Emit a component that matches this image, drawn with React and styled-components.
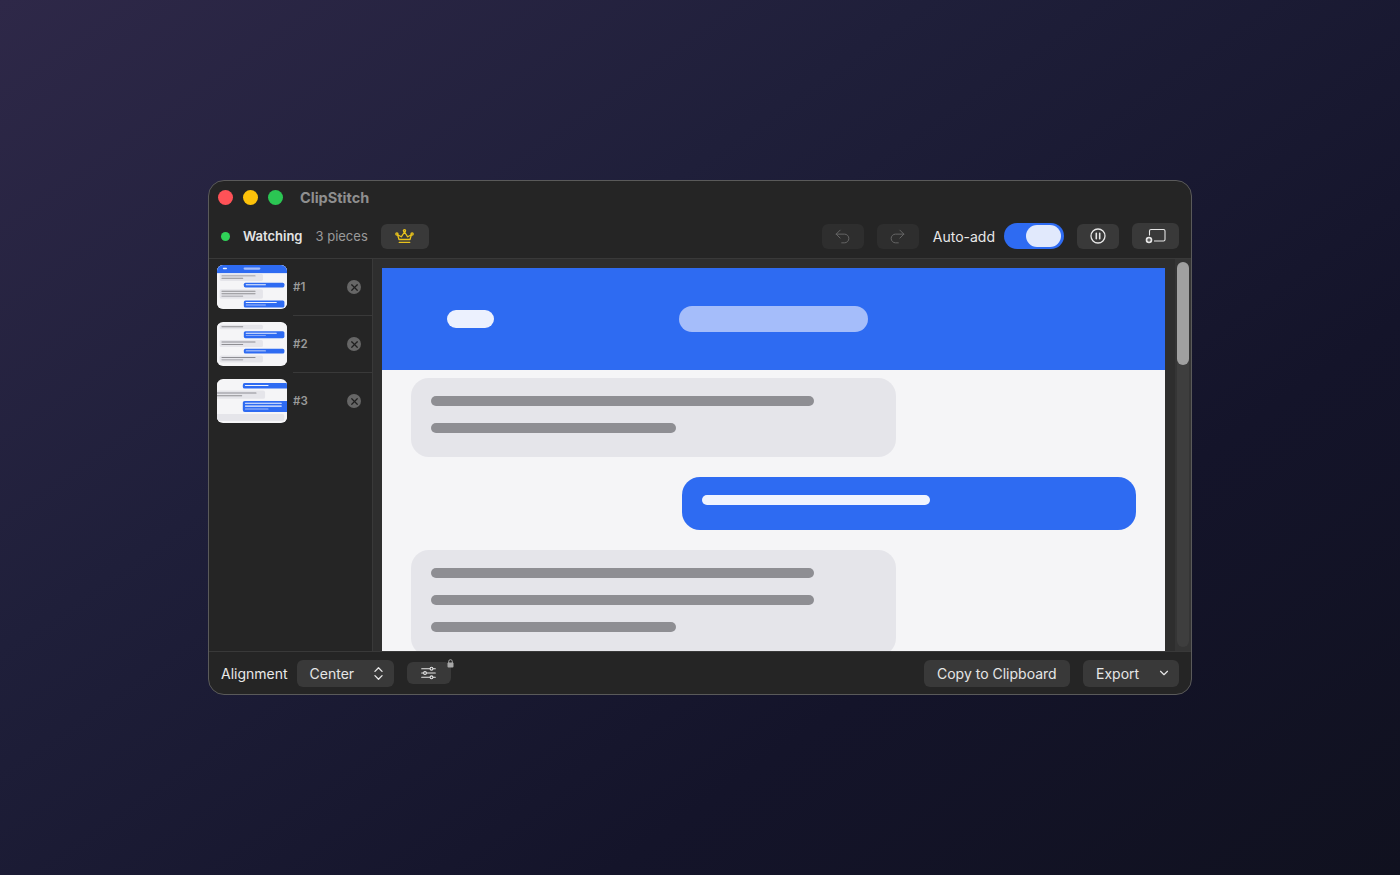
import React from 'react'
import styled, { createGlobalStyle } from 'styled-components'
import { ChevronDown, ChevronsUpDown, Redo2, Undo2, X } from 'lucide-react'

const BLUE = '#2e6bf2'
const PALE = '#f0f4fe'

const GlobalStyle = createGlobalStyle`
  html, body {
    margin: 0;
    height: 100%;
  }
  body {
    font-family: Inter, "Liberation Sans", sans-serif;
    background: linear-gradient(145deg, #2e2848 0%, #1f1f3a 35%, #14142a 70%, #10111f 100%);
  }
  #root {
    height: 100%;
  }
`

const Desktop = styled.div`
  height: 875px;
  display: flex;
  align-items: center;
  justify-content: center;
`

const Window = styled.div`
  width: 984px;
  height: 515px;
  box-sizing: border-box;
  display: flex;
  flex-direction: column;
  background: #252525;
  border: 1px solid #5a5a5a;
  border-radius: 16px;
  overflow: hidden;
  color: #e8e8e8;
`

const TitleBar = styled.div`
  height: 34px;
  flex-shrink: 0;
  box-sizing: border-box;
  display: flex;
  align-items: center;
  padding: 0 0 2px 9px;
  gap: 10px;
`

const Light = styled.span`
  width: 15px;
  height: 15px;
  border-radius: 50%;
  background: ${p => p.$color};
`

const AppName = styled.span`
  margin-left: 7px;
  font-size: 14.5px;
  font-weight: 700;
  color: #8f8f8f;
`

const Toolbar = styled.div`
  height: 44px;
  flex-shrink: 0;
  box-sizing: border-box;
  display: flex;
  align-items: center;
  padding: 0 12px 1px;
  border-bottom: 1px solid #393939;
`

const StatusDot = styled.span`
  width: 9px;
  height: 9px;
  border-radius: 50%;
  background: #30d158;
  margin-right: 13px;
`

const Status = styled.span`
  font-size: 13px;
  font-weight: 600;
  color: #e4e4e4;
  margin-right: 13px;
`

const Count = styled.span`
  font-size: 13px;
  color: #9a9a9a;
  margin-right: 13px;
`

const Spacer = styled.div`
  flex: 1;
`

const IconButton = styled.div`
  width: ${p => p.$w || 42}px;
  height: ${p => p.$h || 25}px;
  border-radius: 6px;
  display: flex;
  align-items: center;
  justify-content: center;
  background: ${p => (p.$dim ? '#2e2e2e' : '#393939')};
  color: ${p => (p.$dim ? '#6e6e6e' : '#e6e6e6')};
  margin-left: ${p => p.$ml || 0}px;
  position: relative;
`

const SwitchLabel = styled.span`
  font-size: 14px;
  color: #e8e8e8;
  margin: 0 9px 0 14px;
`

const Switch = styled.div`
  width: 60px;
  height: 26px;
  box-sizing: border-box;
  padding: 2px 3px;
  border-radius: 13px;
  background: ${BLUE};
  display: flex;
  justify-content: flex-end;
`

const Knob = styled.div`
  width: 35px;
  height: 22px;
  border-radius: 11px;
  background: #e1e9fc;
`

const Body = styled.div`
  flex: 1;
  min-height: 0;
  display: flex;
`

const Sidebar = styled.div`
  width: 164px;
  flex-shrink: 0;
  box-sizing: border-box;
  border-right: 1px solid #393939;
  padding: 6px 0 0 8px;
`

const Piece = styled.div`
  height: 57px;
  box-sizing: border-box;
  display: flex;
  align-items: flex-start;
  gap: 6px;
`

const Thumb = styled.div`
  width: 70px;
  height: 44px;
  flex-shrink: 0;
  border-radius: 6px;
  overflow: hidden;
  background: #f5f5f7;
`

const ThumbScale = styled.div`
  width: 783px;
  transform-origin: 0 0;
  transform: translate(${p => p.$x || 0}px, ${p => p.$y || 0}px) scale(${p => p.$scale || 0.0894});
`

const PieceMeta = styled.div`
  flex: 1;
  height: 44px;
  display: flex;
  align-items: center;
  justify-content: space-between;
  padding-right: 11px;
  position: relative;
  &::after {
    content: '';
    display: ${p => (p.$last ? 'none' : 'block')};
    position: absolute;
    left: 0;
    right: 0;
    top: 50px;
    height: 1px;
    background: #393939;
  }
`

const PieceNumber = styled.span`
  font-size: 11.5px;
  font-weight: 600;
  color: #9a9a9a;
`

const RemoveDot = styled.div`
  width: 14px;
  height: 14px;
  border-radius: 50%;
  background: #666;
  color: #1f1f1f;
  display: flex;
  align-items: center;
  justify-content: center;
`

const Canvas = styled.div`
  flex: 1;
  min-width: 0;
  display: flex;
  background: #2e2e2e;
`

const Viewport = styled.div`
  flex: 1;
  min-width: 0;
  padding: 9px 10px 0 9px;
  overflow: hidden;
`

const Doc = styled.div`
  background: #f5f5f7;
  height: 100%;
  overflow: hidden;
`

const Page = styled.div`
  background: #f5f5f7;
  width: 783px;
`

const ChatHeader = styled.div`
  height: 102px;
  background: ${BLUE};
  display: flex;
  align-items: center;
  padding-left: 65px;
  gap: 185px;
`

const BackPill = styled.div`
  width: 47px;
  height: 18px;
  border-radius: 9px;
  background: #ecf1fe;
`

const TitlePill = styled.div`
  width: 189px;
  height: 26px;
  border-radius: 13px;
  background: #a5bdfa;
`

const Thread = styled.div`
  display: flex;
  flex-direction: column;
  gap: 20px;
  padding: 8px 29px;
`

const Bubble = styled.div`
  box-sizing: border-box;
  width: ${p => p.$w || (p.$sent ? 454 : 485)}px;
  min-height: ${p => p.$h || (p.$sent ? 53 : 0)}px;
  align-self: ${p => (p.$sent ? 'flex-end' : 'flex-start')};
  border-radius: 18px;
  background: ${p => (p.$sent ? BLUE : '#e5e5ea')};
  padding: 18px 20px 24px;
  display: flex;
  flex-direction: column;
  gap: 17px;
`

const Line = styled.div`
  height: 10px;
  border-radius: 5px;
  width: ${p => p.$w}px;
  background: ${p => p.$color};
`

const ScrollTrack = styled.div`
  width: 16px;
  flex-shrink: 0;
  box-sizing: border-box;
  padding: 3px 2px 4px;
  background: #353535;
`

const ScrollRail = styled.div`
  height: 100%;
  border-radius: 6px;
  background: #3e3e3e;
`

const ScrollThumb = styled.div`
  height: 103px;
  border-radius: 6px;
  background: #a0a0a0;
`

const Footer = styled.div`
  height: 43px;
  flex-shrink: 0;
  box-sizing: border-box;
  display: flex;
  align-items: center;
  padding: 0 12px;
  border-top: 1px solid #393939;
  font-size: 14px;
`

const FooterLabel = styled.span`
  color: #e8e8e8;
  margin-right: 9px;
`

const SelectButton = styled.div`
  height: 27px;
  box-sizing: border-box;
  border-radius: 6px;
  background: #393939;
  color: #e6e6e6;
  display: flex;
  align-items: center;
  justify-content: space-between;
  width: ${p => p.$w}px;
  padding: ${p => p.$pad || '0 13px'};
  margin-left: ${p => p.$ml || 0}px;
  white-space: nowrap;
`

const LockBadge = styled.span`
  position: absolute;
  top: -3px;
  right: -3px;
  display: flex;
  color: #a8a8a8;
`

const received2 = [383, 245]
const received3 = [383, 383, 245]

const Received = ({ lines, w, h }) => (
  <Bubble $w={w} $h={h}>
    {lines.map((width, i) => (
      <Line key={i} $w={width} $color="#8e8e93" />
    ))}
  </Bubble>
)

const Sent = ({ lines }) => (
  <Bubble $sent>
    {lines.map((width, i) => (
      <Line key={i} $w={width} $color={i < lines.length - 1 || lines.length === 1 ? PALE : '#a5bdfa'} />
    ))}
  </Bubble>
)

const PieceOne = () => (
  <Page>
    <ChatHeader>
      <BackPill />
      <TitlePill />
    </ChatHeader>
    <Thread>
      <Received lines={received2} />
      <Sent lines={[228]} />
      <Received lines={received3} />
      <Sent lines={[350, 228]} />
    </Thread>
  </Page>
)

const PieceTwo = () => (
  <Page>
    <Thread>
      <Received lines={[245]} />
      <Sent lines={[350, 228]} />
      <Received lines={received2} />
      <Sent lines={[228]} />
      <Received lines={received2} />
    </Thread>
  </Page>
)

const PieceThree = () => (
  <Page>
    <Thread>
      <Sent lines={[228]} />
      <Received lines={received2} />
      <Sent lines={[355, 355, 228]} />
      <Received lines={[]} w={670} h={67} />
    </Thread>
  </Page>
)

const pieces = [
  { id: 1, Content: PieceOne, y: -1 },
  { id: 2, Content: PieceTwo, y: 2 },
  { id: 3, Content: PieceThree, x: -5.4, y: 3.2, scale: 0.104 },
]

const CrownIcon = () => (
  <svg width="19" height="15" viewBox="0 0 19 15" fill="none" stroke="#e8c21c" strokeWidth="1.3" strokeLinejoin="round">
    <path d="M4 10.500 2.600 5.800 6.300 7.800 9.500 3 12.700 7.800 16.400 5.800 15 10.500Z" />
    <path d="M4.200 13.300h10.600" strokeLinecap="round" />
    <circle cx="9.500" cy="1.800" r="1.100" />
    <circle cx="1.900" cy="5" r="1.100" />
    <circle cx="17.100" cy="5" r="1.100" />
  </svg>
)

const PauseIcon = () => (
  <svg width="16" height="16" viewBox="0 0 16 16" fill="none" stroke="currentColor" strokeWidth="1.3">
    <circle cx="8" cy="8" r="7" />
    <path d="M6.300 5.300v5.400M9.700 5.300v5.400" strokeWidth="1.600" strokeLinecap="round" />
  </svg>
)

const AddFrameIcon = () => (
  <svg width="21" height="16" viewBox="0 0 21 16" fill="none">
    <path d="M4.500 7.500V3A1.500 1.500 0 0 1 6 1.500h12.500A1.500 1.500 0 0 1 20 3v8.500a1.500 1.500 0 0 1-1.500 1.500H9" stroke="currentColor" strokeWidth="1.100" />
    <circle cx="4" cy="12" r="3.300" fill="currentColor" />
    <path d="M2.200 12h3.600M4 10.200v3.600" stroke="#393939" strokeWidth="1.100" />
  </svg>
)

const SlidersIcon = () => (
  <svg width="15" height="14" viewBox="0 0 15 14" fill="none" stroke="currentColor" strokeWidth="1.100" strokeLinecap="round">
    <path d="M0.700 2.700h13.600M0.700 7h13.600M0.700 11.300h13.600" />
    <circle cx="10.500" cy="2.700" r="1.400" fill="#393939" />
    <circle cx="4" cy="7" r="1.400" fill="#393939" />
    <circle cx="10.500" cy="11.300" r="1.400" fill="#393939" />
  </svg>
)

const LockIcon = () => (
  <svg width="7" height="9" viewBox="0 0 7 9" fill="none">
    <path d="M1.700 4V2.500a1.800 1.800 0 0 1 3.600 0V4" stroke="currentColor" strokeWidth="1" />
    <rect x="0.500" y="3.500" width="6" height="5" rx="1" fill="currentColor" />
  </svg>
)

const App = () => (
  <>
    <GlobalStyle />
    <Desktop>
      <Window>
        <TitleBar>
          <Light $color="#ff5257" />
          <Light $color="#fdc20a" />
          <Light $color="#2bc653" />
          <AppName>ClipStitch</AppName>
        </TitleBar>
        <Toolbar>
          <StatusDot />
          <Status>Watching</Status>
          <Count>3 pieces</Count>
          <IconButton $w={48}>
            <CrownIcon />
          </IconButton>
          <Spacer />
          <IconButton $dim>
            <Undo2 size={19} strokeWidth={1.1} />
          </IconButton>
          <IconButton $dim $ml={13}>
            <Redo2 size={19} strokeWidth={1.1} />
          </IconButton>
          <SwitchLabel>Auto-add</SwitchLabel>
          <Switch>
            <Knob />
          </Switch>
          <IconButton $ml={13}>
            <PauseIcon />
          </IconButton>
          <IconButton $ml={13} $w={47} $h={26}>
            <AddFrameIcon />
          </IconButton>
        </Toolbar>
        <Body>
          <Sidebar>
            {pieces.map(({ id, Content, x, y, scale }) => (
              <Piece key={id}>
                <Thumb>
                  <ThumbScale $x={x} $y={y} $scale={scale}>
                    <Content />
                  </ThumbScale>
                </Thumb>
                <PieceMeta $last={id === 3}>
                  <PieceNumber>#{id}</PieceNumber>
                  <RemoveDot>
                    <X size={11} strokeWidth={2.6} />
                  </RemoveDot>
                </PieceMeta>
              </Piece>
            ))}
          </Sidebar>
          <Canvas>
            <Viewport>
              <Doc>
                <PieceOne />
              </Doc>
            </Viewport>
            <ScrollTrack>
              <ScrollRail>
                <ScrollThumb />
              </ScrollRail>
            </ScrollTrack>
          </Canvas>
        </Body>
        <Footer>
          <FooterLabel>Alignment</FooterLabel>
          <SelectButton $w={97} $pad="0 7px 0 13px">
            Center
            <ChevronsUpDown size={17} strokeWidth={1.9} />
          </SelectButton>
          <IconButton $ml={13} $w={44} $h={22}>
            <SlidersIcon />
            <LockBadge>
              <LockIcon />
            </LockBadge>
          </IconButton>
          <Spacer />
          <SelectButton $w={146}>Copy to Clipboard</SelectButton>
          <SelectButton $w={96} $ml={13} $pad="0 8px 0 13px">
            Export
            <ChevronDown size={14} strokeWidth={2} />
          </SelectButton>
        </Footer>
      </Window>
    </Desktop>
  </>
)

export default App
